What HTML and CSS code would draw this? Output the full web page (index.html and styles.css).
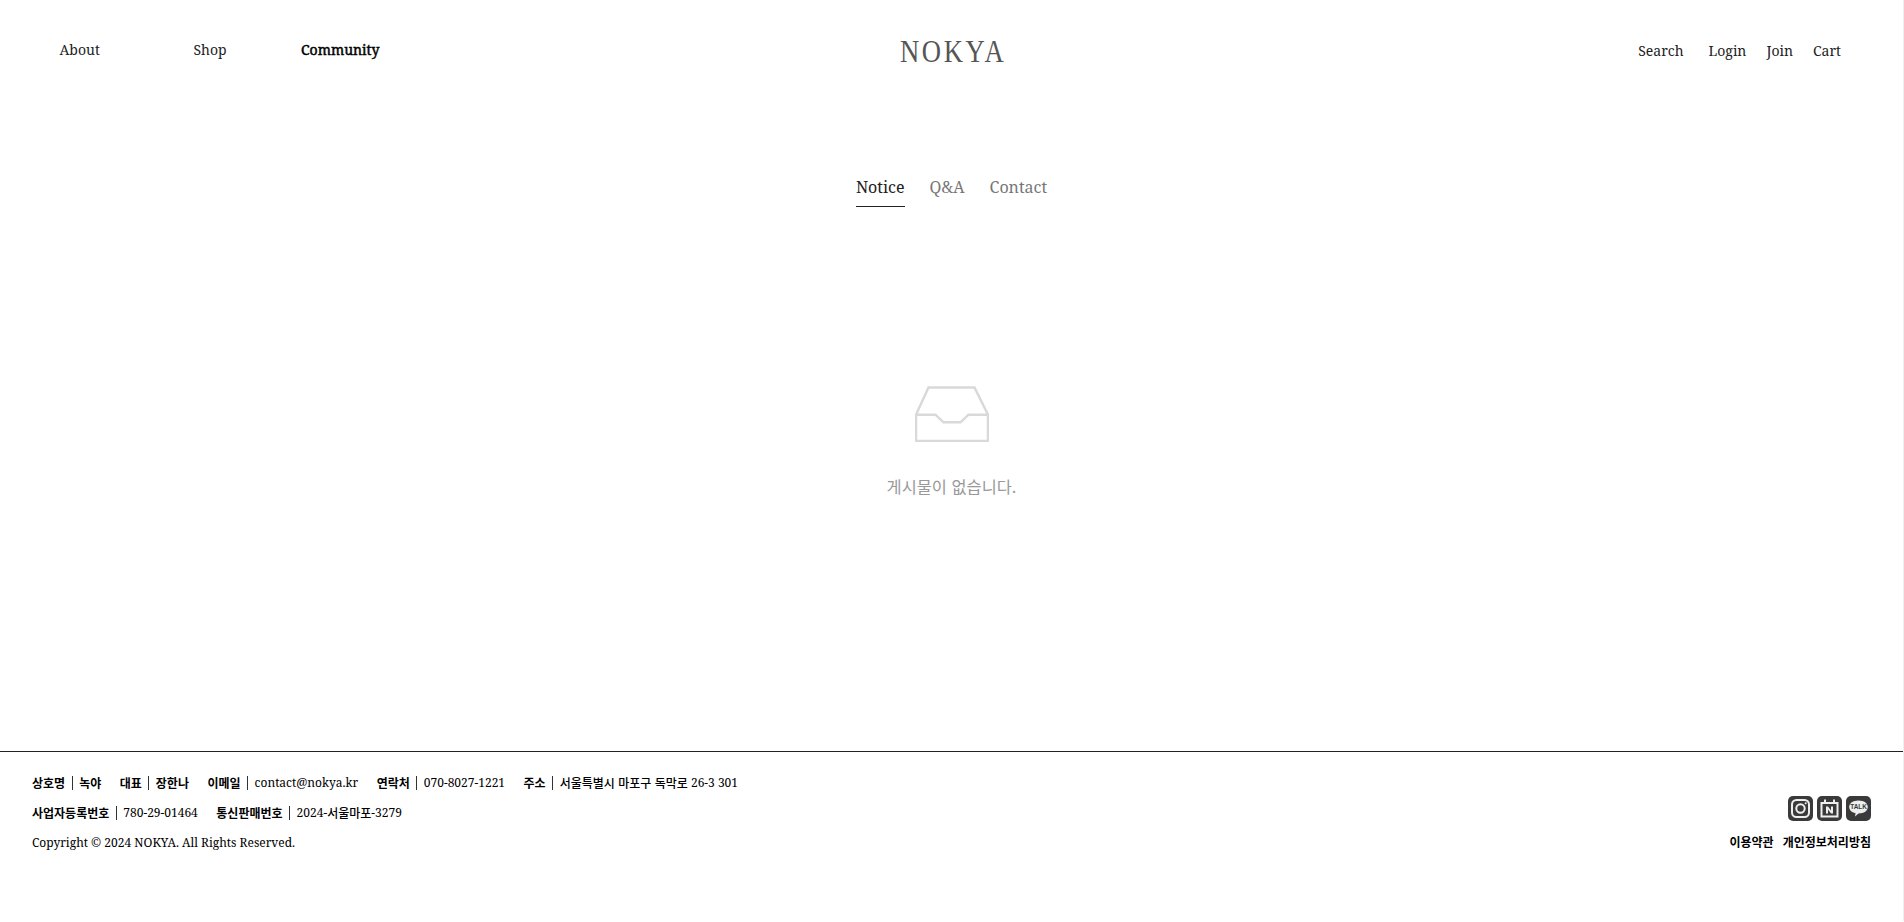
FILE: index.html
```html
<!DOCTYPE html>
<html lang="ko">
<head>
    <meta charset="UTF-8">
    <meta name="viewport" content="width=device-width, initial-scale=1.0">
    <title>NOKYA</title>
    <link rel="stylesheet" href="styles.css">
</head>
<body>
    <header class="site-header">
        <nav class="main-nav">
            <a class="main-nav-item about" href="#">About</a>
            <a class="main-nav-item shop" href="#">Shop</a>
            <a class="main-nav-item active" href="#">Community</a>
        </nav>
        <a class="logo" href="#">NOKYA</a>
        <nav class="util-nav">
            <a class="util-search" href="#">Search</a>
            <a class="util-login" href="#">Login</a>
            <a class="util-join" href="#">Join</a>
            <a href="#">Cart</a>
        </nav>
    </header>

    <main class="board">
        <div class="tabs">
            <a class="tab active" href="#">Notice</a>
            <a class="tab" href="#">Q&amp;A</a>
            <a class="tab" href="#">Contact</a>
        </div>
        <div class="empty">
            <!-- empty inbox -->
            <svg class="empty-icon" viewBox="0 0 74 56" width="74" height="56">
                <path d="M1 28.7 L13.5 1.5 H59.5 L73 28.7 V55 H1 Z M1 28.7 H20.5 L28.5 36.3 H45.5 L53.5 28.7 H73" fill="none" stroke="#d9d9d9" stroke-width="2.5"/>
            </svg>
            <p class="empty-text">게시물이 없습니다.</p>
        </div>
    </main>

    <footer class="site-footer">
        <div class="footer-info">
            <div class="info-row">
                <span class="info-item"><b>상호명</b><i></i><b>녹야</b></span>
                <span class="info-item"><b>대표</b><i></i><b>장한나</b></span>
                <span class="info-item"><b>이메일</b><i></i>contact@nokya.kr</span>
                <span class="info-item"><b>연락처</b><i></i>070-8027-1221</span>
                <span class="info-item"><b>주소</b><i></i><span class="ko">서울특별시 마포구 독막로</span>&nbsp;26-3 301</span>
            </div>
            <div class="info-row">
                <span class="info-item"><b>사업자등록번호</b><i></i>780-29-01464</span>
                <span class="info-item"><b>통신판매번호</b><i></i>2024-<span class="ko">서울마포</span>-3279</span>
            </div>
            <div class="info-row">Copyright © 2024 NOKYA. All Rights Reserved.</div>
        </div>
        <div class="footer-side">
            <div class="sns">
                <a class="sns-icon" href="#">
                    <svg viewBox="0 0 25 25" width="25" height="25">
                        <rect x="4" y="4" width="17" height="17" rx="4.5" fill="none" stroke="#eee" stroke-width="2"/>
                        <circle cx="12.5" cy="12.5" r="4.2" fill="none" stroke="#eee" stroke-width="2"/>
                        <circle cx="17.7" cy="7.3" r="1" fill="#eee"/>
                    </svg>
                </a>
                <a class="sns-icon" href="#">
                    <svg viewBox="0 0 25 25" width="25" height="25">
                        <path d="M4.5 7 H20.5 V20.5 H4.5 Z" fill="none" stroke="#eee" stroke-width="2"/>
                        <path d="M8 3.5 V7.5 M17 3.5 V7.5" stroke="#eee" stroke-width="2"/>
                        <path d="M9 17.5 V10.5 H11 L14 14.5 V10.5 H16 V17.5 H14 L11 13.5 V17.5 Z" fill="#eee"/>
                    </svg>
                </a>
                <a class="sns-icon" href="#">
                    <svg viewBox="0 0 25 25" width="25" height="25">
                        <path d="M12.5 4.5 C18 4.5 21.8 7.3 21.8 11 C21.8 14.7 18 17.5 12.5 17.5 L9 20.5 L9.6 17.2 C5.6 16.3 3.2 14 3.2 11 C3.2 7.3 7 4.5 12.5 4.5 Z" fill="#eee"/>
                        <text class="talk" x="12.5" y="13.2">TALK</text>
                    </svg>
                </a>
            </div>
            <div class="policy">
                <a href="#">이용약관</a>
                <a href="#">개인정보처리방침</a>
            </div>
        </div>
    </footer>
</body>
</html>
```

FILE: styles.css
```css
* {
    box-sizing: border-box;
}

html, body {
    margin: 0;
    padding: 0;
    background: #fff;
    color: #222;
    font-family: 'Noto Serif', 'DejaVu Serif', 'Noto Sans CJK KR', serif;
}

/* faint line down the right edge of the page */
body {
    border-right: 1px solid #f0f0f0;
}

a {
    color: inherit;
    text-decoration: none;
}

/* Header */
.site-header {
    display: flex;
    justify-content: space-between;
    align-items: flex-start;
    height: 100px;
    padding: 40px 62px 0 59.5px;
    position: relative;
    font-size: 14px;
}

.main-nav {
    display: flex;
    line-height: 20px;
}

.main-nav-item.about {
    width: 134px;
}

.main-nav-item.shop {
    width: 107.5px;
}

/* looks like a faux bold in the original, same width as regular */
.main-nav-item.active {
    color: #000;
    -webkit-text-stroke: 0.45px #000;
}

.logo {
    position: absolute;
    left: 900px;
    top: 32px;
    font-family: 'Liberation Serif', serif;
    font-size: 31px;
    line-height: 40px;
    letter-spacing: 3px;
    color: #555;
    transform: scaleX(0.86);
    transform-origin: left center;
}

.util-nav {
    display: flex;
    line-height: 20px;
    margin-top: 1px;
}

.util-search {
    margin-right: 25px;
}

.util-login {
    margin-right: 20px;
}

.util-join {
    margin-right: 20px;
}

/* Board */
.board {
    height: 651px;
    padding-top: 75px;
}

.tabs {
    display: flex;
    justify-content: center;
    gap: 25px;
    font-size: 16px;
    color: #777;
}

.tab {
    line-height: 24px;
    padding-bottom: 7px;
    border-bottom: 1px solid transparent;
}

.tab.active {
    color: #222;
    border-bottom-color: #222;
}

.empty {
    display: flex;
    flex-direction: column;
    align-items: center;
    margin-top: 179px;
}

.empty-icon {
    display: block;
}

.empty-text {
    margin: 32px 0 0;
    font-family: 'Noto Sans CJK KR', sans-serif;
    font-size: 16.4px;
    line-height: 24px;
    color: #999;
}

/* Footer */
.site-footer {
    display: flex;
    justify-content: space-between;
    height: 170px;
    padding: 16px 32px 0 32px;
    border-top: 1px solid #222;
    font-size: 12px;
    color: #000;
}

.info-row {
    display: flex;
    align-items: center;
    gap: 18.5px;
    height: 30px;
    line-height: 20px;
}

.info-item {
    display: flex;
    align-items: center;
}

.info-item b {
    font-family: 'Noto Sans CJK KR', sans-serif;
    font-weight: 700;
}

.info-item .ko {
    font-family: 'Noto Sans CJK KR', sans-serif;
    font-weight: 500;
}

.info-item i {
    width: 1px;
    height: 14px;
    margin: 0 6.5px;
    background: #333;
}

.footer-side {
    display: flex;
    flex-direction: column;
    align-items: flex-end;
    padding-top: 28px;
}

.sns {
    display: flex;
    gap: 4px;
}

.sns-icon {
    display: block;
    width: 25px;
    height: 25px;
    border-radius: 5px;
    background: #3a3a3a;
}

.sns-icon svg {
    display: block;
}

.talk {
    font-family: 'Liberation Sans', sans-serif;
    font-size: 6.4px;
    font-weight: 700;
    fill: #3a3a3a;
    text-anchor: middle;
}

.policy {
    display: flex;
    gap: 9px;
    margin-top: 11px;
    font-family: 'Noto Sans CJK KR', sans-serif;
    font-weight: 700;
    line-height: 20px;
}
```
